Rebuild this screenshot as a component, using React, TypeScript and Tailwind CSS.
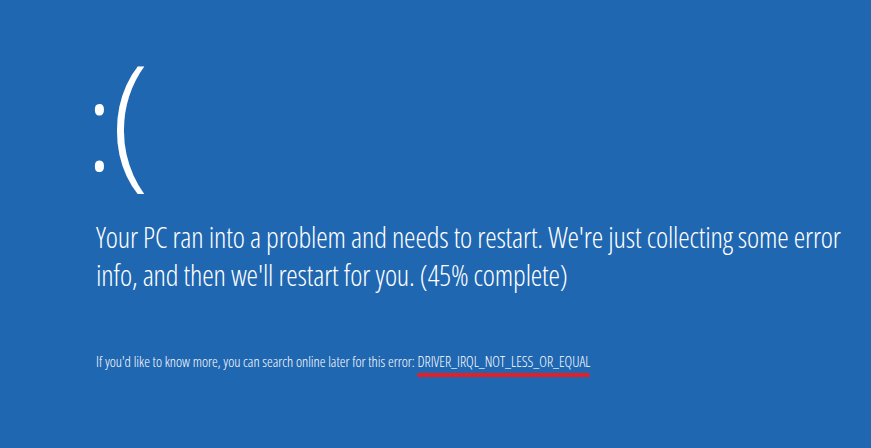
export default function App() {
  return (
    <main className="w-[871px] h-[448px] bg-[#2067b2] text-white overflow-hidden pl-[96px] pt-[42px] font-['Open_Sans',sans-serif] [font-stretch:condensed]">
      <div className="flex items-baseline h-[143px] leading-none font-light -ml-[9px]">
        <span className="text-[125px]">:</span>
        <span className="text-[145px] -ml-[2px]">(</span>
      </div>
      <p className="mt-[33px] text-[29px] font-light leading-[38px] w-[770px] tracking-[-0.17px]">
        Your PC ran into a problem and needs to restart. We're just collecting some error info,
        and then we'll restart for you. (45% complete)
      </p>
      <p className="mt-[58px] text-[14.5px] leading-[20px] font-light">
        If you'd like to know more, you can search online later for this error:{" "}
        <span className="relative inline-block">
          DRIVER_IRQL_NOT_LESS_OR_EQUAL
          <span className="absolute left-0 right-0 -bottom-[5px] h-[4px] rounded-full bg-[#e41f26]" />
        </span>
      </p>
    </main>
  );
}
